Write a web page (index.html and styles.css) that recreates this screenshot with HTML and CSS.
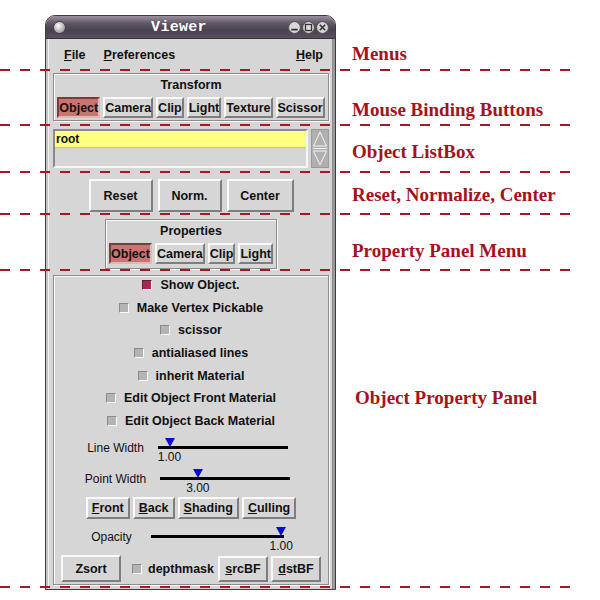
FILE: index.html
```html
<!DOCTYPE html>
<html>
<head>
<meta charset="utf-8">
<title>Viewer</title>
<link rel="stylesheet" href="styles.css">
</head>
<body>
<div class="page">
  <div class="window">
    <div class="titlebar">
      <span class="orb"></span>
      <span class="title">Viewer</span>
      <span class="wbtns">
        <svg class="wb" viewBox="0 0 12 12"><circle cx="6" cy="6" r="5.5" fill="#d8d8d8" stroke="#555" stroke-width="1"/><path d="M3 8h6" stroke="#333" stroke-width="1.5"/></svg>
        <svg class="wb" viewBox="0 0 12 12"><circle cx="6" cy="6" r="5.5" fill="#d8d8d8" stroke="#555" stroke-width="1"/><rect x="3.2" y="3.2" width="5.6" height="5.6" fill="none" stroke="#333" stroke-width="1.2"/></svg>
        <svg class="wb" viewBox="0 0 12 12"><circle cx="6" cy="6" r="5.5" fill="#d8d8d8" stroke="#555" stroke-width="1"/><path d="M3.5 3.5l5 5M8.5 3.5l-5 5" stroke="#333" stroke-width="1.5"/></svg>
      </span>
    </div>
    <div class="client">
      <div class="menubar">
        <span class="menu"><u>F</u>ile</span>
        <span class="menu"><u>P</u>references</span>
        <span class="menu help"><u>H</u>elp</span>
      </div>

      <div class="frame transform">
        <div class="frame-title">Transform</div>
        <div class="btnrow">
          <span class="btn sm on">Object</span>
          <span class="btn sm">Camera</span>
          <span class="btn sm">Clip</span>
          <span class="btn sm">Light</span>
          <span class="btn sm">Texture</span>
          <span class="btn sm">Scissor</span>
        </div>
      </div>

      <div class="listbox">
        <div class="list"><div class="item">root</div></div>
        <div class="scroll">
          <svg viewBox="0 0 18 39" width="18" height="39">
            <path d="M9 3L2.5 17H15.5Z" fill="none" stroke="#f4f4f4" stroke-width="1"/>
            <path d="M2 19.5H16" stroke="#f4f4f4" stroke-width="1"/>
            <path d="M2.5 22H15.5L9 36Z" fill="none" stroke="#f4f4f4" stroke-width="1"/>
          </svg>
        </div>
      </div>

      <div class="rnc">
        <span class="btn big">Reset</span>
        <span class="btn big">Norm.</span>
        <span class="btn big">Center</span>
      </div>

      <div class="frame props">
        <div class="frame-title">Properties</div>
        <div class="btnrow">
          <span class="btn sm on">Object</span>
          <span class="btn sm">Camera</span>
          <span class="btn sm">Clip</span>
          <span class="btn sm">Light</span>
        </div>
      </div>

      <div class="frame panel">
        <div class="checks">
          <div class="chk"><span class="box on"></span>Show Object.</div>
          <div class="chk"><span class="box"></span>Make Vertex Pickable</div>
          <div class="chk"><span class="box"></span>scissor</div>
          <div class="chk"><span class="box"></span>antialiased lines</div>
          <div class="chk"><span class="box"></span>inherit Material</div>
          <div class="chk"><span class="box"></span>Edit Object Front Material</div>
          <div class="chk"><span class="box"></span>Edit Object Back Material</div>
        </div>

        <div class="srow">
          <span class="slabel">Line Width</span>
          <div class="slider">
            <span class="track"></span>
            <span class="thumb" style="left:9%"></span>
            <span class="val" style="left:9%">1.00</span>
          </div>
        </div>
        <div class="srow point">
          <span class="slabel">Point Width</span>
          <div class="slider">
            <span class="track"></span>
            <span class="thumb" style="left:29%"></span>
            <span class="val" style="left:29%">3.00</span>
          </div>
        </div>

        <div class="btnrow fbsc">
          <span class="btn md"><u>F</u>ront</span>
          <span class="btn md"><u>B</u>ack</span>
          <span class="btn md"><u>S</u>hading</span>
          <span class="btn md"><u>C</u>ulling</span>
        </div>

        <div class="srow opacity">
          <span class="slabel">Opacity</span>
          <div class="slider wide">
            <span class="track"></span>
            <span class="thumb" style="left:98%"></span>
            <span class="val" style="left:98%">1.00</span>
          </div>
        </div>

        <div class="bottomrow">
          <span class="btn zs">Zsort</span>
          <span class="chk inline"><span class="box"></span>depthmask</span>
          <span class="btn bf"><u>s</u>rcBF</span>
          <span class="btn bf"><u>d</u>stBF</span>
        </div>
      </div>
    </div>
  </div>

  <div class="notes">
    <div class="note n1"><div class="note-label">Menus</div><div class="rule"></div></div>
    <div class="note n2"><div class="note-label">Mouse Binding Buttons</div><div class="rule"></div></div>
    <div class="note n3"><div class="note-label">Object ListBox</div><div class="rule"></div></div>
    <div class="note n4"><div class="note-label">Reset, Normalize, Center</div><div class="rule"></div></div>
    <div class="note n5"><div class="note-label">Property Panel Menu</div><div class="rule"></div></div>
    <div class="note n6"><div class="note-label">Object Property Panel</div><div class="rule"></div></div>
  </div>
</div>
</body>
</html>
```

FILE: styles.css
```css
* { box-sizing: border-box; }
html, body { margin: 0; padding: 0; background: #fff; }
body { font-family: "Liberation Sans", Arial, sans-serif; color: #111; }

.page { position: relative; width: 600px; height: 600px; overflow: hidden; }

/* ---------- window ---------- */
.window {
  margin: 15px 0 0 45px;
  width: 291px;
  height: 575px;
  border: 1px solid #3c3c3c;
  border-radius: 10px 10px 0 0;
  background: #d6d6d6;
  display: flex;
  flex-direction: column;
  overflow: hidden;
}

.titlebar {
  height: 23px;
  flex: none;
  display: flex;
  align-items: center;
  padding: 0 6px 0 7px;
  background: linear-gradient(#9a90a0 0%, #5e5464 35%, #4a414f 65%, #5a5060 100%);
  border-bottom: 1px solid #333;
}
.orb {
  width: 13px; height: 13px; border-radius: 50%;
  background: radial-gradient(circle at 40% 35%, #ffffff 0%, #c8c8c8 40%, #7a7a7a 100%);
  border: 1px solid #444;
}
.title {
  flex: 1;
  text-align: center;
  color: #fff;
  font: bold 15px "Liberation Mono", "DejaVu Sans Mono", monospace;
  letter-spacing: 0.3px;
  padding-left: 4px;
}
.wbtns { display: flex; gap: 1px; }
.wb { width: 13px; height: 13px; display: block; }

.client {
  flex: 1;
  display: flex;
  flex-direction: column;
  border-left: 2px solid #c4c4c4;
  border-right: 2px solid #9a9a9a;
  box-shadow: inset 1px 0 0 #f2f2f2, inset -1px 0 0 #8a8a8a;
  padding: 0 4px 0 5px;
}

.menubar {
  height: 30px;
  flex: none;
  display: flex;
  align-items: center;
  padding: 1px 6px 0 11px;
  font-weight: bold;
  font-size: 12.5px;
}
.menu { margin-right: 18px; }
.menu.help { margin: 0 0 0 auto; }

/* ---------- frames & buttons ---------- */
.frame {
  border: 1px solid #8c8c8c;
  box-shadow: inset 1px 1px 0 #fbfbfb, 1px 1px 0 #fbfbfb;
}
.frame-title {
  text-align: center;
  font-weight: bold;
  font-size: 12.5px;
  line-height: 16px;
}
.btnrow { display: flex; justify-content: center; gap: 3px; }

.btn {
  display: inline-flex;
  align-items: center;
  justify-content: center;
  background: #d6d6d6;
  border: 2px solid;
  border-color: #fafafa #7e7e7e #7e7e7e #fafafa;
  font-weight: bold;
  font-size: 12.5px;
  color: #111;
  white-space: nowrap;
}
.btn.on {
  background: #c97373;
  border-color: #7c3c3c #e9b4b4 #e9b4b4 #7c3c3c;
}
.btn.sm { height: 21px; padding: 0; }

.transform { margin-top: 4px; height: 48px; padding: 3px 2px 0; }
.transform .frame-title { margin-bottom: 4px; }

.listbox {
  margin-top: 8px;
  height: 39px;
  display: flex;
}
.list {
  flex: 1;
  border: 2px solid;
  border-color: #8a8a8a #f6f6f6 #f6f6f6 #8a8a8a;
  background: #d6d6d6;
}
.item {
  height: 17px;
  background: #ffff80;
  border-bottom: 1px solid #c8c880;
  font-weight: bold;
  font-size: 12px;
  line-height: 16px;
  padding-left: 1px;
}
.scroll {
  width: 18px;
  margin-left: 3px;
  background: #b0b0b0;
  border: 1px solid #9a9a9a;
  display: flex;
}
.scroll svg { display: block; margin: -1px; }

.rnc {
  margin-top: 11px;
  display: flex;
  justify-content: center;
  gap: 5px;
}
.btn.big { height: 33px; width: 64px; font-size: 12.5px; }
.rnc .btn:last-child { width: 67px; }

.props {
  margin-top: 7px;
  align-self: center;
  width: 172px;
  height: 50px;
  padding: 3px 2px 0;
}
.props .frame-title { margin-bottom: 4px; }

/* ---------- object property panel ---------- */
.panel {
  margin-top: 6px;
  height: 310px;
  padding: 1px 2px 2px;
  display: flex;
  flex-direction: column;
}
.checks { display: flex; flex-direction: column; }
.chk {
  height: 22.67px;
  display: flex;
  justify-content: center;
  align-items: flex-start;
  line-height: 16px;
  font-weight: bold;
  font-size: 12.5px;
}
.box {
  width: 10px; height: 10px;
  margin: 3px 8px 0 0;
  background: #b4b4b4;
  border: 1px solid;
  border-color: #8a8a8a #fafafa #fafafa #8a8a8a;
}
.box.on { background: #a8284e; border-color: #6a1a30 #fafafa #fafafa #6a1a30; }

.srow {
  height: 32px;
  display: flex;
  justify-content: center;
  align-items: flex-start;
  padding-right: 7px;
}
.srow.point { height: 29px; }
.slabel {
  font-size: 12px;
  line-height: 14px;
  margin-top: 4px;
  margin-right: 14px;
}
.slider { position: relative; width: 130px; height: 28px; }
.slider.wide { width: 133px; }
.track {
  position: absolute; left: 0; right: 0; top: 9px;
  height: 3px; background: #000;
}
.thumb {
  position: absolute; top: 1px;
  width: 0; height: 0;
  margin-left: -5px;
  border-left: 5px solid transparent;
  border-right: 5px solid transparent;
  border-top: 9px solid #0a0ad0;
}
.val {
  position: absolute; top: 13px;
  transform: translateX(-50%);
  font-size: 12px;
  line-height: 14px;
}
.checks + .srow { margin-top: 1px; }

.fbsc { gap: 3px; }
.btn.md { height: 22px; padding: 0 4px; }

.opacity { margin-top: 7px; height: 30px; }
.opacity .slabel { margin-right: 19px; }

.bottomrow {
  margin-top: auto;
  display: flex;
  align-items: center;
  justify-content: center;
  gap: 3px;
}
.btn.zs { height: 27px; width: 60px; margin-right: 8px; }
.chk.inline { height: auto; align-items: center; margin-right: 1px; }
.chk.inline .box { margin: 0 6px 0 0; }
.btn.bf { height: 26px; width: 50px; }

/* ---------- annotations ---------- */
.notes {
  position: absolute;
  left: 0; top: 0;
  width: 600px;
  display: flex;
  flex-direction: column;
  pointer-events: none;
}
.note { display: flex; flex-direction: column; justify-content: flex-end; }
.note-label {
  margin-left: 352px;
  font: bold 19px "Liberation Serif", "Times New Roman", serif;
  line-height: 20px;
  color: #a5121d;
}
.rule {
  width: 578px;
  height: 2px;
  background: repeating-linear-gradient(90deg, #a31a26 0 10px, transparent 10px 20px);
}
.n1 { height: 71px; } .n1 .note-label { margin-bottom: 5px; }
.n2 { height: 55px; } .n2 .note-label { margin-bottom: 4px; }
.n3 { height: 47px; } .n3 .note-label { margin-bottom: 9px; }
.n4 { height: 42px; } .n4 .note-label { margin-bottom: 8px; }
.n5 { height: 56px; } .n5 .note-label { margin-bottom: 8px; }
.n6 { height: 317px; } .n6 .note-label { margin-bottom: 178px; margin-left: 355px; }
```
